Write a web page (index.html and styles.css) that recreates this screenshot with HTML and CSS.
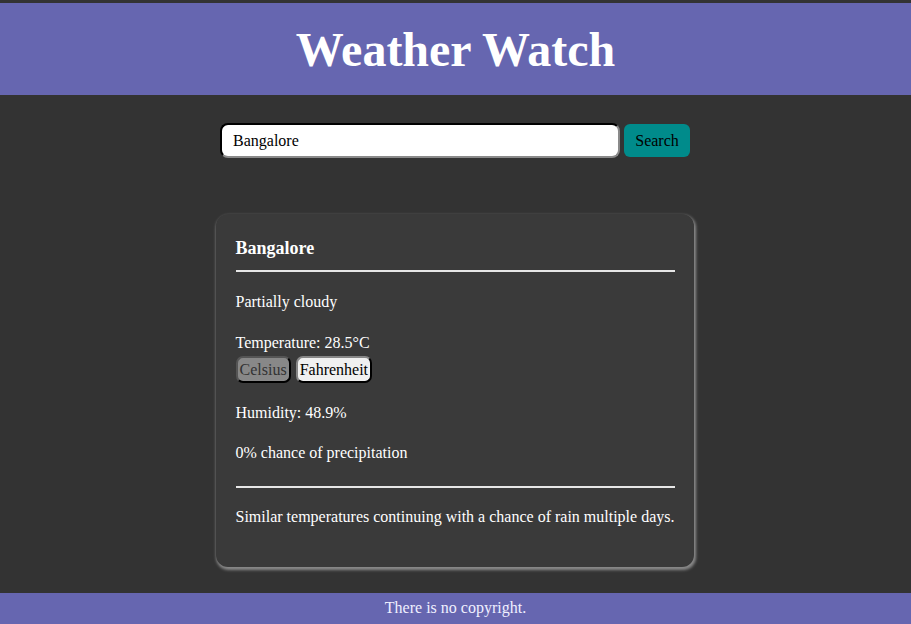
FILE: index.html
```html
<!DOCTYPE html>
<html>
<head>
<meta charset="utf-8">
<link rel="stylesheet" href="styles.css">
</head>
<body>
<header class="site-header">
  <h1 class="title">Weather Watch</h1>
</header>
<main class="main">
  <form class="search">
    <input class="search-input" type="text" value="Bangalore">
    <button class="search-btn" type="button">Search</button>
  </form>
  <section class="card">
    <h2 class="city">Bangalore</h2>
    <hr class="rule">
    <p class="line">Partially cloudy</p>
    <p class="line temp">Temperature: 28.5°C</p>
    <div class="units">
      <button class="unit unit-active" type="button">Celsius</button>
      <button class="unit unit-off" type="button">Fahrenheit</button>
    </div>
    <p class="line">Humidity: 48.9%</p>
    <p class="line precip">0% chance of precipitation</p>
    <hr class="rule rule-bottom">
    <p class="line summary">Similar temperatures continuing with a chance of rain multiple days.</p>
  </section>
</main>
<footer class="site-footer">There is no copyright.</footer>
</body>
</html>
```
FILE: styles.css
```css
* { box-sizing: border-box; }
html, body { height: 100%; }
body {
  margin: 0;
  padding-top: 3px;
  background: #333333;
  font-family: "Liberation Serif", "Times New Roman", serif;
  font-size: 16px;
  color: #ffffff;
  display: flex;
  flex-direction: column;
}
.site-header {
  background: #6666b0;
  height: 92px;
  display: flex;
  align-items: center;
  justify-content: center;
}
.title {
  margin: 0;
  font-size: 48px;
  font-weight: bold;
  line-height: 55px;
  color: #ffffff;
}
.main {
  flex: 1;
  display: flex;
  flex-direction: column;
  align-items: center;
  padding-top: 28px;
}
.search {
  display: flex;
  gap: 4px;
  align-items: center;
  margin-right: 1px;
}
.search-input {
  width: 400px;
  height: 35px;
  border: 2px inset #767676;
  border-color: #1e1e1e #8a8a8a #8a8a8a #1e1e1e;
  border-radius: 8px;
  padding: 0 11px;
  font-family: "Liberation Serif", serif;
  font-size: 16px;
  color: #000;
  background: #fff;
}
.search-btn {
  width: 66px;
  height: 33px;
  border: none;
  border-radius: 6px;
  background: #008b8b;
  color: #000;
  font-family: "Liberation Serif", serif;
  font-size: 16px;
  padding: 0;
}
.card {
  margin-top: 56px;
  width: 478px;
  margin-right: 2px;
  background: #3a3a3a;
  border-radius: 12px;
  padding: 24px 19px 41px 20px;
  box-shadow: 1px 2px 3px 1px #8a8a8a;
}
.city {
  margin: 0;
  font-size: 18px;
  line-height: 21px;
  font-weight: bold;
}
.rule {
  margin: 11px 0 0 0;
  border: 0;
  border-top: 2px solid #e6e6e6;
}
.line {
  margin: 0;
  line-height: 18px;
  margin-top: 21px;
}
.temp { margin-top: 23px; }
.units {
  display: flex;
  gap: 5px;
  margin-top: 4px;
}
.unit {
  height: 27px;
  border-radius: 7px;
  font-family: "Liberation Serif", serif;
  font-size: 16px;
  padding: 0 2px;
  border: 2px outset #333;
}
.unit-active {
  background: #888888;
  color: #333333;
  border-color: #555 #333 #333 #555;
}
.unit-off {
  background: #f0f0f0;
  color: #000;
  border-color: #333 #111 #111 #333;
}
.units + .line { margin-top: 21px; }
.precip { margin-top: 22px; }
.rule-bottom { margin-top: 24px; }
.summary { margin-top: 20px; }
.site-footer {
  background: #6666b0;
  height: 31px;
  line-height: 30px;
  text-align: center;
  color: #f0f0ff;
  font-size: 16px;
}
```
